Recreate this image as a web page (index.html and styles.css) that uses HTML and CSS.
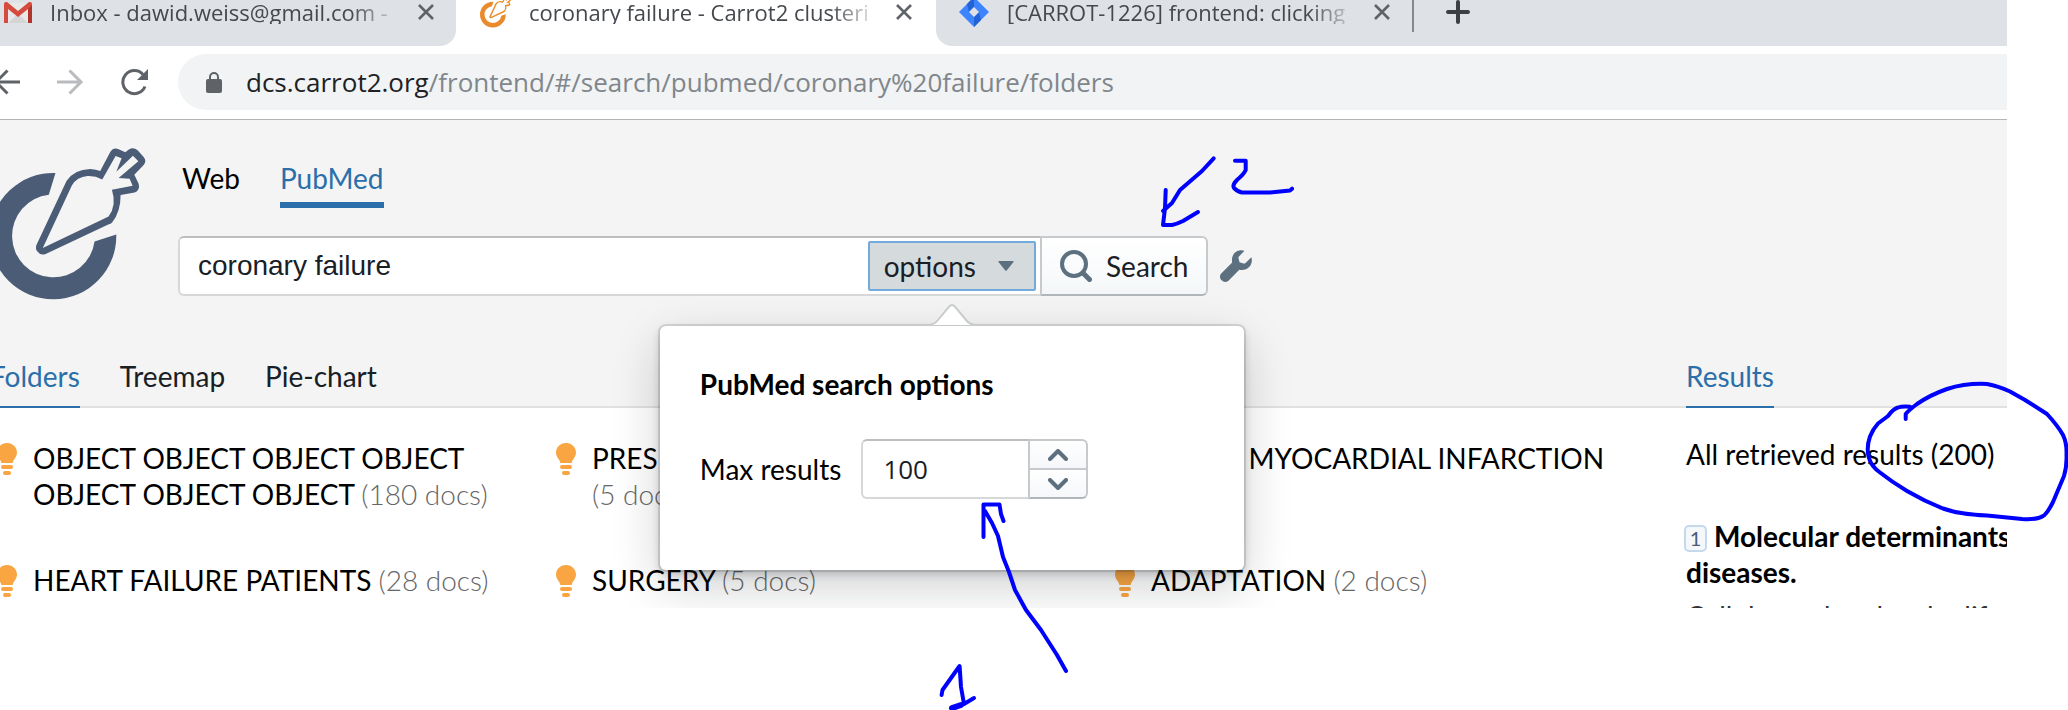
FILE: index.html
```html
<!DOCTYPE html>
<html lang="en">
<head>
<meta charset="utf-8">
<title>coronary failure - Carrot2 clustering</title>
<link rel="stylesheet" href="styles.css">
</head>
<body>
<svg class="defs" aria-hidden="true">
  <symbol id="carrot" viewBox="-30 50 470 458">
    <path fill="currentColor" d="M166 128L146 193A124 124 0 1 0 283 333L348 312A189 189 0 1 1 166 128Z"/>
    <path fill="currentColor" fill-rule="evenodd" d="M109 343L199 152Q222 117 270 116Q288 117 300 122L330 65Q340 50 355 57L375 66L388 56Q400 50 412 60L430 80Q440 92 430 104L402 133L415 160Q420 180 403 186L361 194Q361 245 336 275Q332 280 324 282L135 371Q120 375 112 363Q105 355 109 343ZM128 352L215 165Q230 140 262 137Q285 136 306 147L346 77L364 84L348 124L398 76L414 93L355 143L388 145L397 166L335 178Q350 225 325 258Z"/>
  </symbol>
  <symbol id="bulb" viewBox="0 0 32 32">
    <path fill="currentColor" d="M16 0C10 0 6 4.500 6 9.500C6 14 9.500 16 10.200 19.500Q10.400 20 11 20H21Q21.600 20 21.800 19.500C22.500 16 26 14 26 9.500C26 4.500 22 0 16 0Z"/>
    <rect fill="currentColor" x="10" y="22" width="12" height="4" rx="2"/>
    <rect fill="currentColor" x="12" y="28" width="8" height="4" rx="2"/>
  </symbol>
  <symbol id="cross" viewBox="0 0 16 16">
    <path fill="none" stroke="currentColor" stroke-width="2.600" d="M1 1L15 15M15 1L1 15"/>
  </symbol>
</svg>

<div class="window">
  <div class="tabstrip">
    <div class="tab tab-first">
      <svg class="mail" viewBox="0 0 28 21"><path fill="#e8e8e8" d="M2 1H26V21H2Z"/><path fill="#d5d5d5" d="M4 21L14 12L24 21Z"/><path fill="#d54b3d" d="M0 21V2Q0 0 2 0H3L14 9L25 0H26Q28 0 28 2V21H24V7L14 15L4 7V21Z"/><path fill="#b0342a" d="M24 7L28 3V21H24Z"/></svg>
      <span class="tab-title">Inbox - dawid.weiss@gmail.com -</span>
      <button class="close" aria-label="Close tab"><svg><use href="#cross"/></svg></button>
    </div>
    <div class="tab tab-active">
      <svg class="favicon"><use href="#carrot"/></svg>
      <span class="tab-title">coronary failure - Carrot2 clusteri</span>
      <button class="close" aria-label="Close tab"><svg><use href="#cross"/></svg></button>
    </div>
    <div class="tab tab-last">
      <svg class="jira" viewBox="0 0 30 30"><path fill="#3d84ff" d="M15 0L30 15L15 30L0 15Z"/><path fill="#2463d6" d="M15 0V10L10 15L8 7ZM15 30V20L20 15L22 23Z"/><path fill="#dee1e6" d="M15 10L20 15L15 20L10 15Z"/></svg>
      <span class="tab-title">[CARROT-1226] frontend: clicking</span>
      <button class="close" aria-label="Close tab"><svg><use href="#cross"/></svg></button>
      <span class="divider"></span>
      <button class="new-tab" aria-label="New tab"><svg viewBox="0 0 24 24"><path stroke="#3c4043" stroke-width="4" stroke-linecap="round" d="M12 2V22M2 12H22"/></svg></button>
    </div>
  </div>

  <div class="toolbar">
    <div class="nav-buttons">
      <button aria-label="Back"><svg viewBox="0 0 28 28"><path fill="none" stroke="#5f6368" stroke-width="3" d="M28 14H4M15.500 2.500L4 14L15.500 25.500"/></svg></button>
      <button aria-label="Forward"><svg viewBox="0 0 28 28"><path fill="none" stroke="#b9bbbe" stroke-width="3" d="M1 14H25M13.500 2.500L25 14L13.500 25.500"/></svg></button>
      <button aria-label="Reload"><svg viewBox="0 0 28 28"><path fill="none" stroke="#5f6368" stroke-width="3" d="M25 18.500A11.500 11.500 0 1 1 23 6.500"/><path fill="#5f6368" d="M28 1V12H17Z"/></svg></button>
    </div>
    <div class="address">
      <svg viewBox="0 0 16 21"><path fill="none" stroke="#5f6368" stroke-width="2" d="M4 8V5A4 4 0 0 1 12 5V8"/><rect fill="#5f6368" y="7" width="16" height="14" rx="2"/></svg>
      <span class="url"><span class="host">dcs.carrot2.org</span>/frontend/#/search/pubmed/coronary%20failure/folders</span>
    </div>
  </div>

  <div class="app">
    <header>
      <div class="brand-row">
        <svg class="logo" role="img" aria-label="Carrot2"><use href="#carrot"/></svg>
        <div class="query">
          <nav class="sources">
            <a href="#web">Web</a>
            <a href="#pubmed" class="current">PubMed</a>
          </nav>
          <form class="search">
            <div class="search-box">
              <input type="text" value="coronary failure" aria-label="Query">
              <div class="options">
                <button type="button" class="options-button">options
                  <svg viewBox="0 0 16 10"><path fill="#5c7080" d="M1 0H15Q16 0 15.500 1L8.700 9.500Q8 10 7.300 9.500L.5 1Q0 0 1 0Z"/></svg>
                </button>
                <div class="popover">
                  <svg class="arrow" viewBox="0 0 48 24"><path fill="#fff" stroke="#c9cccc" stroke-width="2" d="M0 22Q6 22 10 17L20 5Q24 -1 28 5L38 17Q42 22 48 22"/><path fill="#fff" d="M0 23H48V24H0Z"/></svg>
                  <h2>PubMed search options</h2>
                  <div class="field">
                    <label for="max">Max results</label>
                    <div class="numeric">
                      <input id="max" type="text" value="100">
                      <div class="steps">
                        <button type="button" aria-label="Increase"><svg viewBox="0 0 20 12"><path d="M2 10L10 2L18 10"/></svg></button>
                        <button type="button" aria-label="Decrease"><svg viewBox="0 0 20 12"><path d="M2 2L10 10L18 2"/></svg></button>
                      </div>
                    </div>
                  </div>
                </div>
              </div>
            </div>
            <button type="submit" class="submit"><svg viewBox="0 0 32 32"><circle cx="14" cy="14" r="12" fill="none" stroke="#5c7080" stroke-width="4"/><path stroke="#5c7080" stroke-width="5" stroke-linecap="round" d="M23 23L29.500 29.500"/></svg>Search</button>
            <button type="button" class="settings" aria-label="Settings"><svg viewBox="0 0 32 32"><path fill="#5c7080" d="M31.400 7.200L25.500 13Q24.600 13.800 23.500 13.400L19.500 12.300L18.500 8.300Q18.200 7.200 19 6.400L24.500.8C18 -1.500 10.500 3.500 12.200 12.500L1.200 23.500Q-1 26 .8 29.600Q4 33.500 8.200 31L19.300 19.800C28 21.500 33.500 14.500 31.400 7.200Z"/></svg></button>
          </form>
        </div>
      </div>
      <div class="view-row">
        <nav class="views">
          <a href="#folders" class="current">Folders</a>
          <a href="#treemap">Treemap</a>
          <a href="#pie">Pie-chart</a>
        </nav>
        <nav class="views results-tab"><a href="#results" class="current">Results</a></nav>
      </div>
    </header>

    <main>
      <ul class="folders">
        <li><svg><use href="#bulb"/></svg><span>OBJECT OBJECT OBJECT OBJECT<br>OBJECT OBJECT OBJECT <small>(180 docs)</small></span></li>
        <li><svg><use href="#bulb"/></svg><span>PRES<br><small>(5 docs)</small></span></li>
        <li><svg><use href="#bulb"/></svg><span>ACUTE MYOCARDIAL INFARCTION</span></li>
        <li><svg><use href="#bulb"/></svg><span>HEART FAILURE PATIENTS <small>(28 docs)</small></span></li>
        <li><svg><use href="#bulb"/></svg><span>SURGERY <small>(5 docs)</small></span></li>
        <li><svg><use href="#bulb"/></svg><span>ADAPTATION <small>(2 docs)</small></span></li>
      </ul>
      <section class="results">
        <p>All retrieved results (200)</p>
        <article>
          <h3><span class="rank">1</span>Molecular determinants<br>diseases.</h3>
          <p>Cellular and molecular life</p>
        </article>
      </section>
    </main>
  </div>
</div>

<svg class="ink" viewBox="0 0 2068 710" aria-hidden="true">
  <path d="M1213.700 158.300L1202 171L1180 190L1172 203L1163 211M1165.700 190L1165 208L1163 225H1172Q1177 224 1183 221L1198 212"/>
  <path d="M1235 160.700H1245.700V170Q1244 174 1237 180Q1232 185 1234 188Q1238 192 1242 192.500H1270L1290 190.500L1292 188.700"/>
  <path d="M983.500 537V504.500H999.500L1001 514L1003.500 521M985 511L992 523L998 536L1003 557L1009 572L1015 590L1026 610L1041 630L1057 655L1066 671"/>
  <path d="M941.600 695L942.500 690L956 671L959.600 666L961 687L964 704M974 698L964 704"/>
  <path class="thick" d="M952 708L961 705"/>
  <path d="M1905.700 419V414Q1909 410 1917 404Q1930 395 1947 389Q1966 383 1987 384Q1998 386 2010 391.500L2025 400L2047 414Q2058 426 2063 435Q2067 443 2066.500 455Q2067 466 2064 476L2053 502Q2047 514 2043 516Q2037 520 2022 519L1987 515.500Q1958 514 1943 508.500Q1924 501 1907 491Q1892 482 1880 472.500Q1871 466 1869 458Q1866 448 1870 436.500Q1873 429 1878 423.500L1888 416Q1893 409 1898 407.500Q1902 406 1910 406.700"/>
</svg>
</body>
</html>
```
FILE: styles.css
```css
* { box-sizing: border-box; }
body { margin: 0; background: #fff; color: #000; font: 28px/36px Lato, "Liberation Sans", sans-serif; }
button, input { font: inherit; color: inherit; margin: 0; }
button { border: 0; padding: 0; background: none; display: flex; align-items: center; }
a { color: inherit; text-decoration: none; }
h2, h3, p, ul { margin: 0; padding: 0; font-size: 28px; }
svg { display: block; flex: none; }
.defs { position: absolute; width: 0; height: 0; }

.window { height: 608px; margin-right: 61px; overflow: hidden; position: relative; }

.tabstrip { display: flex; height: 46px; color: #45484c; font: 22px/24px "Open Sans", sans-serif; }
.tab { display: flex; align-items: center; padding-bottom: 22px; background: #dee1e6; }
.tab-title { flex: none; width: 350px; line-height: 24px; white-space: nowrap; -webkit-mask-image: linear-gradient(90deg, #000 86%, transparent); mask-image: linear-gradient(90deg, #000 86%, transparent); }
.tab-first { width: 456px; padding-left: 4px; border-radius: 0 0 16px 0; }
.tab-first .tab-title { margin: 0 18px; }
.tab-active { width: 480px; padding-left: 24px; background: #fff; }
.tab-active .tab-title { margin: 0 17px; }
.tab-last { flex: 1; padding-left: 23px; border-radius: 0 0 0 16px; }
.tab-last .tab-title { margin: 0 17px 0 18px; }
.mail { width: 28px; height: 21px; }
.favicon { width: 32px; height: 32px; color: #e98b2b; }
.jira { width: 30px; height: 30px; }
.close { color: #5f6368; }
.close svg { width: 16px; height: 16px; }
.divider { width: 2px; height: 40px; margin: 0 32px 0 22px; background: #85888c; }
.new-tab svg { width: 24px; height: 24px; }

.toolbar { display: flex; align-items: center; height: 74px; padding: 8px 0 9px; border-bottom: 1px solid #b4b5b6; }
.nav-buttons { display: flex; gap: 36px; width: 186px; margin-left: -8px; }
.nav-buttons svg { width: 28px; height: 28px; }
.address { flex: 1; display: flex; align-items: center; gap: 24px; height: 56px; padding-left: 28px; border-radius: 28px 0 0 28px; background: #f1f3f4; }
.address svg { width: 16px; height: 21px; }
.url { font: 26px/36px "Open Sans", sans-serif; color: #80868b; white-space: nowrap; }
.host { color: #202124; }

header { padding-top: 17px; background: #f4f4f4; }
.brand-row { display: flex; }
.logo { width: 157px; height: 153px; margin: 10px 31px 0 -10px; color: #4b5c76; }
.query { padding-top: 23px; }
.sources { display: flex; gap: 40px; padding-left: 4px; }
.sources a { padding-bottom: 6px; border-bottom: 6px solid transparent; }
.sources .current { color: #2a6fa9; border-color: #2a6fa9; }
.search { display: flex; align-items: center; margin-top: 28px; }
.search-box { display: flex; align-items: center; width: 862px; height: 60px; padding-right: 4px; border: 2px solid #d5d7d8; border-top-color: #bcbebf; border-right: 0; border-radius: 6px 0 0 6px; background: #fff; }
.search-box > input { flex: 1; min-width: 0; padding: 0 18px; border: 0; outline: 0; background: none; font-family: "Liberation Sans", sans-serif; color: #182026; }
.options { position: relative; }
.options-button { height: 50px; padding: 0 20px 0 14px; gap: 22px; border: 2px solid #74aadb; border-radius: 2px; background: #d5dadd; color: #182026; }
.options-button svg { width: 16px; height: 10px; }
.submit { height: 60px; padding: 0 18px; gap: 14px; border: 2px solid #c6cacd; border-bottom-color: #b1b6ba; border-radius: 0 6px 6px 0; background: linear-gradient(#fff, #f4f7f9); color: #182026; }
.submit svg, .settings svg { width: 32px; height: 32px; }
.settings { margin-left: 12px; }

.popover { position: absolute; z-index: 2; top: 85px; left: 50%; width: 584px; height: 244px; padding: 40px; transform: translateX(-50%); border-radius: 6px; background: #fff; color: #000; box-shadow: 0 0 0 2px rgba(16, 22, 26, .12), 0 4px 8px rgba(16, 22, 26, .2), 0 16px 48px rgba(16, 22, 26, .2); }
.arrow { position: absolute; top: -23px; left: 50%; width: 48px; height: 24px; transform: translateX(-50%); }
.field { display: flex; align-items: center; gap: 20px; margin-top: 37px; }
.numeric { display: flex; height: 60px; }
.numeric input { width: 167px; padding: 0 20px; border: 2px solid #d5d7d8; border-top-color: #bcbebf; border-right: 0; border-radius: 6px 0 0 6px; color: #182026; font: 26px/36px "Open Sans", sans-serif; }
.steps { display: flex; flex-direction: column; width: 60px; }
.steps button { height: 31px; justify-content: center; border: 2px solid #c6cacd; border-radius: 0 6px 0 0; background: linear-gradient(#fff, #f5f7fa); }
.steps button + button { margin-top: -2px; border-bottom-color: #b1b6ba; border-radius: 0 0 6px 0; }
.steps svg { width: 20px; height: 12px; }
.steps path { fill: none; stroke: #5c7080; stroke-width: 4; stroke-linecap: round; stroke-linejoin: round; }

.view-row, main { display: grid; grid-template-columns: minmax(0, 1fr) 321px; }
.view-row { margin-top: 58px; box-shadow: inset 0 -2px #e1e1e1; }
.views { display: flex; gap: 40px; margin-left: -10px; color: #182026; }
.views a { padding-bottom: 12px; border-bottom: 2px solid transparent; }
.views .current { color: #2a6fa9; border-color: #2a6fa9; }
.results-tab { margin-left: 0; }

.folders { display: grid; grid-template-columns: repeat(3, minmax(0, 1fr)); align-content: start; gap: 50px 0; margin-left: -9px; padding: 32px 18px 0 0; list-style: none; }
.folders li { display: flex; gap: 10px; }
.folders svg { width: 32px; height: 32px; margin-top: 3px; color: #f9a541; }
.folders span { white-space: nowrap; }
.folders small { font-size: 28px; font-weight: 300; color: #666; }
.results { padding-top: 28px; white-space: nowrap; }
.results article { margin-top: 46px; color: #333; }
.results h3 { margin-bottom: 8px; color: #000; }
.rank { display: inline-block; width: 23px; height: 27px; margin: 0 7px 0 -2px; border: 2px solid #c5d9ed; border-radius: 5px; background: #f4f8fb; color: #4b5c76; font-size: 20px; font-weight: 400; line-height: 23px; text-align: center; vertical-align: 1px; }

.ink { position: absolute; top: 0; left: 0; z-index: 3; width: 2068px; height: 710px; pointer-events: none; fill: none; stroke: #00f; stroke-width: 4; stroke-linecap: round; stroke-linejoin: round; }
.thick { stroke-width: 6; }
```
